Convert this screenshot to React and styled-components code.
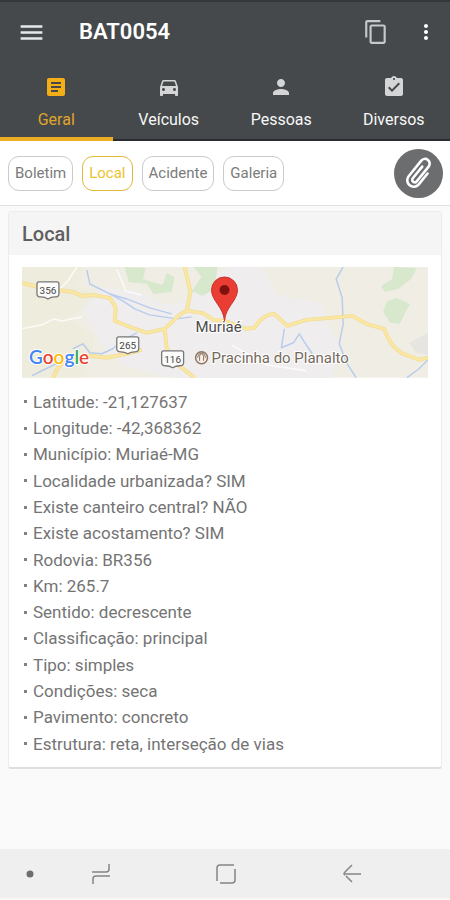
import React, { useState } from "react";
import styled, { createGlobalStyle } from "styled-components";
import {
  MdMenu,
  MdContentCopy,
  MdMoreVert,
  MdArticle,
  MdDirectionsCar,
  MdPerson,
  MdAssignmentTurnedIn,
} from "react-icons/md";

const GlobalStyle = createGlobalStyle`
  *, *::before, *::after { box-sizing: border-box; }
  body { margin: 0; background: #fafafa; }
  body, button { font-family: Roboto, "Liberation Sans", sans-serif; }
  button { margin: 0; padding: 0; border: 0; background: none; cursor: pointer; }
`;

const Screen = styled.div`
  display: flex;
  flex-direction: column;
  min-height: 100vh;
  background: #fafafa;
`;

const Header = styled.header`
  background: #45494b;
  border-top: 2px solid #36393b;
`;

const AppBar = styled.div`
  display: flex;
  align-items: center;
  height: 60px;
  padding: 0 12px 0 16px;
`;

const BarButton = styled.button`
  display: flex;
  align-items: center;
  justify-content: center;
  width: ${(p) => p.$width}px;
  height: 40px;
  color: ${(p) => p.$color};
`;

const Title = styled.h1`
  flex: 1;
  margin: 0 0 0 33px;
  color: #fff;
  font-size: 22px;
  line-height: 30px;
  font-weight: 600;
`;

const Actions = styled.div`
  display: flex;
  align-items: center;
  gap: 18px;
`;

const Tabs = styled.nav`
  display: grid;
  grid-template-columns: repeat(4, 1fr);
`;

const Tab = styled.button`
  display: flex;
  flex-direction: column;
  align-items: center;
  gap: 11px;
  height: 79px;
  padding-top: 13px;
  border-bottom: ${(p) => (p.$active ? "4px solid #ecae22" : "2px solid #2b2c31")};
  color: ${(p) => (p.$active ? "#f5ae15" : "#d3d5d6")};
`;

const TabLabel = styled.span`
  color: ${(p) => (p.$active ? "#e0a62b" : "#f7f7f7")};
  font-size: 16px;
  line-height: 20px;
`;

const ChipBar = styled.div`
  display: flex;
  align-items: center;
  gap: 9px;
  height: 65px;
  padding: 0 7px 0 8px;
  background: #fff;
  border-bottom: 1px solid #e0e0e0;
`;

const Chip = styled.button`
  height: 35px;
  padding: 0 6px;
  border: 1px solid ${(p) => (p.$active ? "#dfb93c" : "#cacaca")};
  border-radius: 11px;
  color: ${(p) => (p.$active ? "#ecc32f" : "#7b7b7b")};
  font-size: 15px;
  line-height: 20px;
`;

const AttachButton = styled.button`
  display: flex;
  align-items: center;
  justify-content: center;
  width: 49px;
  height: 49px;
  margin-left: auto;
  border-radius: 50%;
  background: #6b6d6f;
`;

const Main = styled.main`
  flex: 1;
  padding: 5px 8px 16px;
`;

const Card = styled.section`
  border: 1px solid #ececec;
  border-bottom: 2px solid #dedede;
  border-radius: 3px;
  background: #fff;
`;

const CardTitle = styled.h2`
  margin: 0;
  padding: 9px 13px 7px;
  background: #f5f5f5;
  color: #5f5f5f;
  font-size: 20px;
  line-height: 27px;
  font-weight: 500;
`;

const CardBody = styled.div`
  padding: 12px 13px 10px;
`;

const MapDrawing = styled.svg`
  display: block;
  width: 100%;
  height: auto;
`;

const Details = styled.ul`
  display: grid;
  grid-auto-rows: 1fr;
  align-items: center;
  min-height: 368px;
  margin: 11px 0 0;
  padding: 0;
  list-style: none;
`;

const Detail = styled.li`
  display: flex;
  align-items: center;
  gap: 6px;
  padding-left: 2px;
  color: #747474;
  font-size: 17px;
  line-height: 26px;

  &::before {
    content: "";
    width: 3px;
    height: 3px;
    background: #808080;
  }
`;

const SystemBar = styled.footer`
  display: grid;
  grid-template-columns: 16px 1fr 1fr 1fr;
  height: 51px;
  padding: 0 35px 0 22px;
  background: #efefef;
  border-bottom: 2px solid #f8f8f8;
`;

const SystemButton = styled.button`
  display: flex;
  align-items: center;
  justify-content: center;
`;

const tabs = [
  { label: "Geral", Icon: MdArticle },
  { label: "Veículos", Icon: MdDirectionsCar },
  { label: "Pessoas", Icon: MdPerson },
  { label: "Diversos", Icon: MdAssignmentTurnedIn },
];

const chips = ["Boletim", "Local", "Acidente", "Galeria"];

const details = [
  "Latitude: -21,127637",
  "Longitude: -42,368362",
  "Município: Muriaé-MG",
  "Localidade urbanizada? SIM",
  "Existe canteiro central? NÃO",
  "Existe acostamento? SIM",
  "Rodovia: BR356",
  "Km: 265.7",
  "Sentido: decrescente",
  "Classificação: principal",
  "Tipo: simples",
  "Condições: seca",
  "Pavimento: concreto",
  "Estrutura: reta, interseção de vias",
];

const roads = [
  "M0 16 L20 21 L51 25 L60 29 L71 28 L88 31 L94 41 L93 54 L108 60 L125 66 L143 62 L156 50 Q164 42 172 45 L181 46 L192 53 L203 54 L225 62 L233 61 Q241 47 253 47 L266 59 L285 53 L310 51 L331 49 L345 57 L363 62 Q369 79 380 86 L398 93 L407 91",
  "M165 44 L169 25 L163 0",
  "M143 62 L145 81 L155 97 L173 111",
  "M120 83 L105 87 L85 91 L68 89 L45 91 L36 101 L31 111",
];

const rivers = [
  "M65 3 L68 17 L88 27 L101 34 L113 42 L128 48 L155 52 L170 50",
  "M88 27 L105 32 L128 41 L150 47",
  "M51 82 L61 77 L68 86 L80 87 L91 82 L102 73 L115 66",
  "M10 109 L30 99 L46 92",
  "M322 0 L315 12 L321 31 L322 57 L318 77 L326 97 L335 111",
  "M263 62 L260 81 L272 76 L278 67 L283 75 L291 87",
  "M407 93 L398 102 L386 111",
];

function Shield({ x, y, label }) {
  return (
    <g transform={`translate(${x} ${y})`}>
      <path
        d="M-9 -8 H9 Q11 -8 11 -6 V4 Q11 7 7 7 Q3 7 0 9 Q-3 7 -7 7 Q-11 7 -11 4 V-6 Q-11 -8 -9 -8 Z"
        fill="#fbfbfa"
        stroke="#777"
        strokeWidth="1.3"
      />
      <text y="4" textAnchor="middle" fontSize="10" fill="#444" fontFamily="Roboto, sans-serif">
        {label}
      </text>
    </g>
  );
}

function LocationMap() {
  return (
    <MapDrawing viewBox="0 0 407 111" role="img" aria-label="Mapa de Muriaé">
      <rect width="407" height="111" fill="#f0eee4" />
      <path d="M78 22 Q120 20 140 38 L162 35 L175 15 L210 0 H240 L255 28 L300 36 L306 58 L320 80 L310 111 H150 L100 98 L78 75 L62 45 Z" fill="#f0edef" />
      <path d="M0 0 H62 L55 15 L72 28 L50 50 L24 68 L0 72 Z M0 72 L50 52 L74 72 L60 111 H0Z" fill="#ecebd9" opacity=".6" />
      <g fill="#d7e8cd">
        <path d="M103 0 L124 1 L121 12 L141 18 L145 6 L153 10 L150 25 L132 27 L125 17 L107 15 Z" />
        <path d="M172 0 H196 L193 22 L181 29 L170 24 L180 10 Z" />
        <path d="M373 0 L396 1 L390 12 L377 22 L364 25 L360 19 L371 12 Z" />
        <path d="M366 34 L376 31 L389 37 L384 46 L379 57 L369 56 L362 45 Z" />
      </g>
      <path d="M388 76 L407 66 V88 L395 86 Z" fill="#e6e5e2" />
      <g fill="none" stroke="#fff" strokeWidth="1.5" opacity=".8">
        <path d="M55 0 L46 14 L38 22" />
        <path d="M0 62 L20 58 L32 52 L40 54 L60 50" />
        <path d="M95 2 L104 24 L120 28" />
        <path d="M210 78 L245 98 L285 104" />
      </g>
      <g fill="none" stroke="#b8cdec" strokeWidth="1.5" strokeLinejoin="round">
        {rivers.map((d) => (
          <path key={d} d={d} />
        ))}
      </g>
      <g fill="none" strokeLinejoin="round">
        {roads.map((d) => (
          <path key={d} d={d} stroke="#f2dc98" strokeWidth="4" />
        ))}
        {roads.map((d) => (
          <path key={d} d={d} stroke="#fae7a2" strokeWidth="2.5" />
        ))}
      </g>
      <Shield x={26} y={23} label="356" />
      <Shield x={106} y={78} label="265" />
      <Shield x={151} y={92} label="116" />
      <text x="7" y="97" fontSize="19" fontWeight="600" fontFamily="Lato, sans-serif" stroke="#fff" strokeWidth="2" paintOrder="stroke">
        <tspan fill="#4285f4">G</tspan>
        <tspan fill="#ea4335">o</tspan>
        <tspan fill="#fbbc05">o</tspan>
        <tspan fill="#4285f4">g</tspan>
        <tspan fill="#34a853">l</tspan>
        <tspan fill="#ea4335">e</tspan>
      </text>
      <g fontFamily="Roboto, sans-serif" fontSize="15" stroke="#fff" strokeWidth="2" paintOrder="stroke">
        <text x="174" y="65" fill="#4a4a4a">Muriaé</text>
        <text x="190" y="96" fill="#75695d">Pracinha do Planalto</text>
      </g>
      <g fill="none" stroke="#8e7462">
        <circle cx="180" cy="91" r="6" fill="#f5eee8" strokeWidth="1.5" />
        <path d="M178 94 V90 Q178 87 180 87 Q182 87 182 90 V94 M176 91 Q176 87 180 86 Q184 87 184 91" />
      </g>
      <path d="M203 54 C202 40 190 34 190 23 A13 13 0 0 1 216 23 C216 34 204 40 203 54 Z" fill="#ea3e35" stroke="#c5342c" strokeWidth="1" />
      <circle cx="203" cy="23" r="5" fill="#7f120f" />
    </MapDrawing>
  );
}

function PaperclipIcon() {
  return (
    <svg width="36" height="36" viewBox="-18 -18 36 36" fill="none" stroke="#fff" strokeWidth="2.6" strokeLinecap="round">
      <path
        transform="rotate(39)"
        d="M7 -5 V9 A6.5 6.5 0 0 1 -6 9 V-11 A4.75 4.75 0 0 1 3.5 -11 V8 A2.5 2.5 0 0 1 -1.5 8 V-7"
      />
    </svg>
  );
}

export default function App() {
  const [tab, setTab] = useState("Geral");
  const [chip, setChip] = useState("Local");

  return (
    <>
      <GlobalStyle />
      <Screen>
        <Header>
          <AppBar>
            <BarButton $width={30} $color="#e6e8e9" aria-label="Menu">
              <MdMenu size={29} />
            </BarButton>
            <Title>BAT0054</Title>
            <Actions>
              <BarButton $width={40} $color="#c6c8c9" aria-label="Copiar">
                <MdContentCopy size={26} />
              </BarButton>
              <BarButton $width={24} $color="#ffffff" aria-label="Mais opções">
                <MdMoreVert size={28} />
              </BarButton>
            </Actions>
          </AppBar>
          <Tabs>
            {tabs.map(({ label, Icon }) => (
              <Tab key={label} $active={tab === label} onClick={() => setTab(label)}>
                <Icon size={24} aria-hidden="true" />
                <TabLabel $active={tab === label}>{label}</TabLabel>
              </Tab>
            ))}
          </Tabs>
        </Header>
        <ChipBar>
          {chips.map((label) => (
            <Chip key={label} $active={chip === label} onClick={() => setChip(label)}>
              {label}
            </Chip>
          ))}
          <AttachButton aria-label="Anexar">
            <PaperclipIcon />
          </AttachButton>
        </ChipBar>
        <Main>
          <Card>
            <CardTitle>Local</CardTitle>
            <CardBody>
              <LocationMap />
              <Details>
                {details.map((text) => (
                  <Detail key={text}>{text}</Detail>
                ))}
              </Details>
            </CardBody>
          </Card>
        </Main>
        <SystemBar>
          <SystemButton aria-label="Ocultar barra">
            <svg width="8" height="8" viewBox="0 0 8 8">
              <circle cx="4" cy="4" r="3.5" fill="#6e6e6e" />
            </svg>
          </SystemButton>
          <SystemButton aria-label="Recentes">
            <svg width="20" height="22" viewBox="0 0 20 22" fill="none" stroke="#858585" strokeWidth="1.5">
              <path d="M1 9 H15 Q18 9 18 6 V1 M19 13 H5 Q2 13 2 16 V21" />
            </svg>
          </SystemButton>
          <SystemButton aria-label="Início">
            <svg width="20" height="20" viewBox="0 0 20 20" fill="none" stroke="#858585" strokeWidth="1.5">
              <path d="M1 17 V4 Q1 1 4 1 H18 M19 5 V16 Q19 19 16 19 H4" />
            </svg>
          </SystemButton>
          <SystemButton aria-label="Voltar">
            <svg width="18" height="20" viewBox="0 0 18 20" fill="none" stroke="#858585" strokeWidth="1.5">
              <path d="M9 1 L2 8 Q0 10 2 11 M2 10 H18 M3 12 L9 18" />
            </svg>
          </SystemButton>
        </SystemBar>
      </Screen>
    </>
  );
}
